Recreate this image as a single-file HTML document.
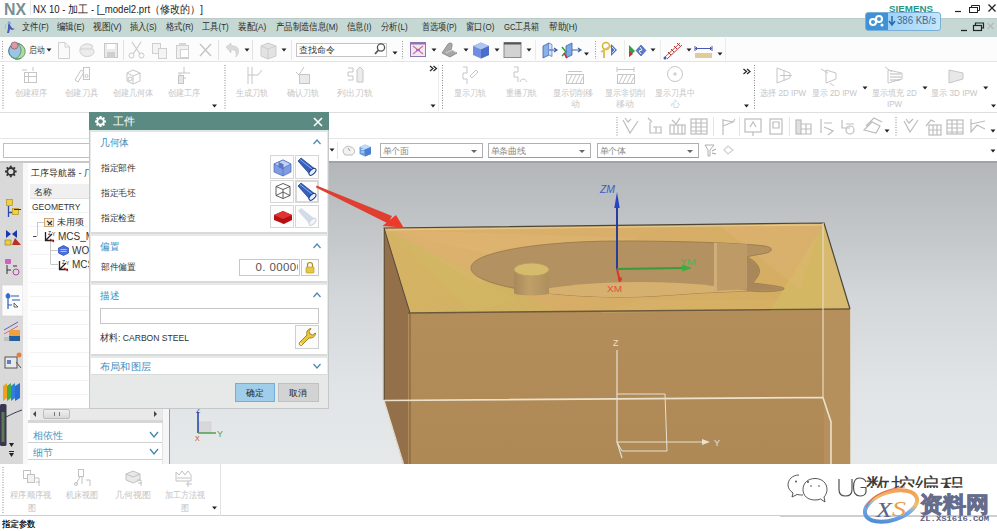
<!DOCTYPE html>
<html><head><meta charset="utf-8">
<style>
*{box-sizing:border-box}
body{margin:0;width:997px;height:531px;position:relative;overflow:hidden;background:#fff;font-family:"Liberation Sans",sans-serif;color:#333}
.a{position:absolute}
.t{position:absolute;white-space:nowrap;line-height:1}
#title{left:0;top:0;width:997px;height:17px;background:#fff}
#menu{left:0;top:17.5px;width:997px;height:20px;background:#c5d8d4;border-top:1.5px solid #bacbc9;border-bottom:1px solid #bccbca}
#tb1{left:0;top:37px;width:997px;height:25px;background:#fcfcfc;border-bottom:1px solid #e4e4e4}
#rib{left:0;top:62px;width:997px;height:51px;background:#fff;border-bottom:1px solid #dedede}
#tb2{left:0;top:113px;width:997px;height:26px;background:#fff;border-bottom:1px solid #e6e6e6}
#sel{left:0;top:139px;width:997px;height:22px;background:#fff}
#vp{left:169px;top:161px;width:828px;height:303px;background:linear-gradient(#b3b7b9,#c6cacc 28%,#d3d7d9 45%,#e1e4e6 74%,#e6e9ea);border-top:2px solid #9fa3a6}
#res{left:0;top:161px;width:23px;height:303px;background:#d9d9d9;border-top:2px solid #c8c8c8}
#nav{left:23px;top:161px;width:146px;height:303px;background:#f4f4f4;border-top:2px solid #c8c8c8}
#brib{left:0;top:464px;width:997px;height:52px;background:#fff;border-bottom:1px solid #cfcfcf}
#status{left:0;top:516px;width:997px;height:15px;background:#fff}
.ddl{position:absolute;height:15px;border:1px solid #b0b0b0;border-bottom-color:#9a9a9a;background:#fff;font-size:9px;color:#8a8a8a;padding:1.5px 0 0 1.5px;letter-spacing:-0.3px;line-height:1.2}
.ddl:after{content:"";position:absolute;right:5px;top:6px;border-left:3px solid transparent;border-right:3px solid transparent;border-top:3px solid #666}
.mi{font-size:9.5px;color:#2b2b2b;top:22px}
.rl{font-size:9px;color:#c4c4c4;text-align:center}
</style></head><body>

<div id="title" class="a">
  <div class="t" style="left:3.5px;top:1.5px;font-size:16px;font-weight:bold;color:#7a8f8f;--fw:22px;transform:scaleX(0.989);transform-origin:0 0">NX</div>
  <div class="a" style="left:30px;top:0;width:1px;height:15px;background:#e6e6e6"></div>
  <div class="t" style="left:33px;top:3.5px;font-size:10.5px;color:#222;--fw:170px;transform:scaleX(0.913);transform-origin:0 0">NX 10 - 加工 - [_model2.prt（修改的）]</div>
  <div class="t" style="left:889px;top:4.5px;font-size:8.5px;font-weight:bold;color:#279686;--fw:44px;transform:scaleX(1.150);transform-origin:0 0">SIEMENS</div>
</div>
<svg class="a" style="left:860px;top:0;z-index:2" width="137" height="37" viewBox="860 0 137 37">
 <path d="M955,11.5 H961" stroke="#222" stroke-width="1.2"/>
 <rect x="969.5" y="7.5" width="8" height="5" fill="none" stroke="#222" stroke-width="1"/><path d="M971.5,7.5 V5.5 H979.5 V10.5 H977.5" fill="none" stroke="#222" stroke-width="1"/>
 <path d="M988.5,4.5 L995.5,11.5 M995.5,4.5 L988.5,11.5" stroke="#222" stroke-width="1.3"/>
 <path d="M961,30.5 H967" stroke="#222" stroke-width="1.3"/>
 <rect x="973.5" y="25.5" width="8" height="5" fill="none" stroke="#222" stroke-width="1.2"/><path d="M975.5,25.5 V23 H983.5 V28 H981.5" fill="none" stroke="#222" stroke-width="1.2"/>
 <path d="M987.5,23 L993.5,29 M993.5,23 L987.5,29" stroke="#b8b8b8" stroke-width="1.3"/>
</svg>
<div id="menu" class="a"></div>
<div class="a" style="left:865px;top:12px;width:76px;height:19px;border-radius:3px;background:linear-gradient(90deg,#3f92d6 0,#3f92d6 22px,#9fd2f6 22px,#c4e6fb 100%);border:1px solid #7ab0d8"></div>
<svg class="a" style="left:868px;top:14px" width="18" height="15"><circle cx="5" cy="8" r="3" fill="none" stroke="#fff" stroke-width="2"/><circle cx="11" cy="5" r="3" fill="none" stroke="#fff" stroke-width="2"/><circle cx="14" cy="11" r="1.5" fill="#fff"/></svg>
<svg class="a" style="left:888px;top:15px" width="8" height="12"><path d="M4,1 V9 M1,6 L4,10 L7,6" stroke="#2a6aa8" stroke-width="1.5" fill="none"/></svg>
<div class="t" style="left:897px;top:16px;font-size:10px;color:#3a6a98;--fw:39px;transform:scaleX(0.961);transform-origin:0 0">386 KB/s</div>
<svg class="a" style="left:3px;top:20px" width="14" height="14"><path d="M5,2 C7,1 8,3 7,5 L9,8 L12,9 L9,10 L7,9 L6,13 L4,13 L5,8 Z" fill="#4a5ab8"/><path d="M3,4 L2,9" stroke="#a0c8a0" stroke-width="1"/><circle cx="6" cy="3" r="1.5" fill="#8aa0e0"/></svg>

<div class="t mi" style="left:21.7px;--fw:26.6px;transform:scaleX(0.828);transform-origin:0 0">文件(F)</div>
<div class="t mi" style="left:56.5px;--fw:27.5px;transform:scaleX(0.842);transform-origin:0 0">编辑(E)</div>
<div class="t mi" style="left:92.5px;--fw:28.4px;transform:scaleX(0.869);transform-origin:0 0">视图(V)</div>
<div class="t mi" style="left:129.9px;--fw:26.7px;transform:scaleX(0.817);transform-origin:0 0">插入(S)</div>
<div class="t mi" style="left:166.0px;--fw:27.5px;transform:scaleX(0.828);transform-origin:0 0">格式(R)</div>
<div class="t mi" style="left:202.2px;--fw:26.6px;transform:scaleX(0.828);transform-origin:0 0">工具(T)</div>
<div class="t mi" style="left:238.3px;--fw:28.2px;transform:scaleX(0.863);transform-origin:0 0">装配(A)</div>
<div class="t mi" style="left:275.9px;--fw:62.0px;transform:scaleX(0.835);transform-origin:0 0">产品制造信息(M)</div>
<div class="t mi" style="left:347.3px;--fw:24.3px;transform:scaleX(0.839);transform-origin:0 0">信息(I)</div>
<div class="t mi" style="left:381.1px;--fw:26.6px;transform:scaleX(0.841);transform-origin:0 0">分析(L)</div>
<div class="t mi" style="left:421.9px;--fw:34.7px;transform:scaleX(0.813);transform-origin:0 0">首选项(P)</div>
<div class="t mi" style="left:466.0px;--fw:28.3px;transform:scaleX(0.839);transform-origin:0 0">窗口(O)</div>
<div class="t mi" style="left:503.8px;--fw:35.5px;transform:scaleX(0.802);transform-origin:0 0">GC工具箱</div>
<div class="t mi" style="left:548.7px;--fw:28.3px;transform:scaleX(0.852);transform-origin:0 0">帮助(H)</div>

<div id="tb1" class="a"></div>
<svg class="a" style="left:0;top:37px" width="730" height="25" viewBox="0 37 730 25">
 <path d="M2.5,41 V59" stroke="#999" stroke-width="1" stroke-dasharray="1,1.5"/>
 <!-- globe -->
 <circle cx="16.5" cy="51" r="7.8" fill="#9cc4e4" stroke="#3a6e84" stroke-width="1"/>
 <path d="M17,43.5 C22,44 26,48 25,53 C24,57 20,60 15,59 C19,57 21,54 21,50 C21,47 19,45 17,43.5 Z" fill="#b4d8a4" stroke="#4a8a58" stroke-width="0.8"/>
 <path d="M10,55 C13,59 18,60 21,58" stroke="#58a068" stroke-width="1.2" fill="none"/>
 <circle cx="14.5" cy="45.5" r="3.6" fill="#dc9aa4" stroke="#7a4a50" stroke-width="0.6"/>
 <path d="M46.5,48.5 L51.5,48.5 L49,51.5 Z" fill="#222"/>
 <!-- new/open/save gray -->
 <path d="M58.5,42.5 H65 L69.5,47 V58.5 H58.5 Z M65,42.5 V47 H69.5" fill="#fafafa" stroke="#cfcfcf" stroke-width="1"/>
 <path d="M80,49 C81,44 88,42 93,46 L91,49 M80,49 C79,54 84,58 90,56 C94,55 95,51 93,49 Z" fill="#ececec" stroke="#d0d0d0" stroke-width="1"/>
 <rect x="104.5" y="43.5" width="13" height="14" fill="#eaeaea" stroke="#c8c8c8"/><rect x="107" y="44" width="8" height="5" fill="#fff"/><rect x="107" y="52" width="8" height="5.5" fill="#cfcfcf"/>
 <line x1="123.5" y1="40" x2="123.5" y2="60" stroke="#e2e2e2"/>
 <!-- scissors -->
 <path d="M132,42 L140,54 M141,42 L133,54" stroke="#cacaca" stroke-width="1.2"/><circle cx="131.5" cy="55.5" r="2.5" fill="none" stroke="#cacaca"/><circle cx="141.5" cy="55.5" r="2.5" fill="none" stroke="#cacaca"/>
 <!-- copy -->
 <rect x="152.5" y="43.5" width="8" height="10" fill="#f4f4f4" stroke="#cfcfcf"/><rect x="158.5" y="48.5" width="8" height="10" fill="#f4f4f4" stroke="#cfcfcf"/>
 <!-- paste -->
 <rect x="176.5" y="45.5" width="12" height="13" fill="#f0f0f0" stroke="#cdcdcd"/><rect x="179" y="43" width="7" height="3" fill="#d6d6d6"/><rect x="180.5" y="49.5" width="8" height="8" fill="#fff" stroke="#d2d2d2"/>
 <!-- delete -->
 <path d="M200,44 L211,56 M211,44 L200,56" stroke="#c2c2c2" stroke-width="1.3"/>
 <line x1="218.5" y1="40" x2="218.5" y2="60" stroke="#e2e2e2"/>
 <!-- undo -->
 <path d="M226,47 L231,43 V46 C237,45 240,49 238,54 L236,57 C237,52 235,49 231,50 V53 Z" fill="#dadada" stroke="#c8c8c8" stroke-width="0.6"/>
 <path d="M244.5,48.5 L249.5,48.5 L247,51.5 Z" fill="#222"/>
 <line x1="252.5" y1="40" x2="252.5" y2="60" stroke="#e2e2e2"/>
 <!-- layer box gray -->
 <path d="M261,46 L268,43 L276,46 V56 L268,59 L261,56 Z" fill="#e2e2e2" stroke="#cdcdcd"/><path d="M261,46 L268,49 L276,46 M268,49 V59" stroke="#cdcdcd" fill="none"/>
 <path d="M281.5,48.5 L286.5,48.5 L284,51.5 Z" fill="#222"/>
 <line x1="291.5" y1="40" x2="291.5" y2="60" stroke="#e6e6e6"/>
 <!-- search icon -->
 <path d="M392.5,51.5 L397.5,51.5 L395,54.5 Z" fill="#222"/>
 <path d="M402.5,41 V59" stroke="#999" stroke-width="1" stroke-dasharray="1,1.5"/>
 <!-- orient view -->
 <rect x="410.5" y="42.5" width="15" height="14" fill="#f0e8f4" stroke="#8a78b0" stroke-width="1"/><rect x="410.5" y="42.5" width="15" height="2" fill="#8a78b0"/>
 <path d="M413,46 L418,50 L413,54 M423,46 L418,50 L423,54" stroke="#e07090" stroke-width="1.3" fill="none"/><path d="M416,50 H420" stroke="#6070d0" stroke-width="1.2"/>
 <path d="M431.5,48.5 L436.5,48.5 L434,51.5 Z" fill="#222"/>
 <!-- shading -->
 <path d="M442,53 L448,44 C450,42 453,43 452,46 L451,50 L457,53 L450,57 Z" fill="#a8a8a8" stroke="#777" stroke-width="0.7"/><path d="M446,53 L452,50 L456,52.5" stroke="#d8d8d8" fill="none"/>
 <path d="M463.5,48.5 L468.5,48.5 L466,51.5 Z" fill="#222"/>
 <!-- blue cube -->
 <path d="M473,46 L481,42.5 L489,46 V55 L481,58.5 L473,55 Z" fill="#6e8ee0"/><path d="M473,46 L481,49.5 L489,46 L481,42.5 Z" fill="#b0c4f4"/><path d="M481,49.5 V58.5 L489,55 V46 Z" fill="#4d6ec8"/>
 <path d="M494.5,48.5 L499.5,48.5 L497,51.5 Z" fill="#222"/>
 <!-- gray window -->
 <rect x="504" y="42.5" width="17" height="15" fill="#d2d2d2" stroke="#8a8a8a" stroke-width="1"/><rect x="504" y="42.5" width="17" height="2" fill="#555"/>
 <path d="M526.5,48.5 L531.5,48.5 L529,51.5 Z" fill="#222"/>
 <line x1="535.5" y1="40" x2="535.5" y2="60" stroke="#ebebeb"/>
 <!-- box with arrow -->
 <path d="M543,46 L549,43 V55 L543,58 Z" fill="#8ab0e8" stroke="#3a60b0" stroke-width="0.8"/><path d="M549,43 L552,44.5 V56.5 L549,55" fill="#d0e0f8" stroke="#3a60b0" stroke-width="0.6"/><path d="M549,50 H556 M554,48 L557,50 L554,52" stroke="#4060a8" stroke-width="1.2" fill="none"/>
 <path d="M566,46 L572,43 V55 L566,58 Z" fill="#7ea8e8" stroke="#3a60b0" stroke-width="0.8"/><path d="M572,50 H580 M578,48 L581,50 L578,52" stroke="#4060a8" stroke-width="1.2" fill="none"/><path d="M562,47 L566,52 M562,56 L566,52" stroke="#30a030" stroke-width="1.5"/><path d="M564,53 L567,58" stroke="#d03030" stroke-width="1.5"/>
 <path d="M584.0,52.5 L589.0,52.5 L586.5,55.5 Z" fill="#222"/>
 <path d="M595.5,41 V59" stroke="#999" stroke-width="1" stroke-dasharray="1,1.5"/>
 <!-- yellow tool -->
 <circle cx="606" cy="46" r="3.5" fill="none" stroke="#d8b040" stroke-width="1.5"/><path d="M604,49 L604,58 M601,52 L611,46" stroke="#e0c050" stroke-width="2"/><path d="M611,44 L617,50 L611,56 Z" fill="#5070c0"/><path d="M612,47 L615,50 L612,53" stroke="#fff" stroke-width="0.8" fill="none"/>
 <line x1="624.5" y1="40" x2="624.5" y2="60" stroke="#ebebeb"/>
 <!-- arrow icon -->
 <path d="M629,45 V57 L635,51 Z" fill="#30a040"/><path d="M629,51 V57 L633,54" fill="#d03030"/><path d="M636,50.5 L641,45 L646,50.5 L641,56 Z" fill="#5a78c8" stroke="#3a58a8" stroke-width="0.6"/><path d="M640,47 L642,50 L639,51 L641,54" stroke="#fff" stroke-width="0.9" fill="none"/>
 <path d="M650.5,48.5 L655.5,48.5 L653,51.5 Z" fill="#222"/>
 <line x1="660.5" y1="40" x2="660.5" y2="60" stroke="#ebebeb"/>
 <!-- red ladder -->
 <path d="M665,57 L680,43" stroke="#d05050" stroke-width="1"/><path d="M667,59 L682,45" stroke="#c04040" stroke-width="1"/><path d="M668,52 L671,55 M671,49 L674,52 M674,46 L677,49 M677,43 L680,46" stroke="#b03030" stroke-width="1"/><circle cx="665" cy="58" r="1.5" fill="#4a58b0"/>
 <path d="M686.5,48.5 L691.5,48.5 L689,51.5 Z" fill="#222"/>
 <!-- dimension -->
 <path d="M695,46 V51 M712,46 V51 M695.5,48.5 H711.5" stroke="#4a58b0" stroke-width="1"/><path d="M697,47 L695.5,48.5 L697,50 M710,47 L711.5,48.5 L710,50" stroke="#4a58b0" fill="none"/><rect x="695" y="53" width="17" height="5" fill="#e0cc98"/>
 <path d="M717.5,52.5 L722.5,52.5 L720,55.5 Z" fill="#222"/>
 <line x1="725.5" y1="38" x2="725.5" y2="61" stroke="#ececec"/>
</svg>
<div class="t" style="left:28.7px;top:46px;font-size:9px;color:#333;--fw:15.6px;transform:scaleX(0.867);transform-origin:0 0">启动</div>
<div class="a" style="left:296px;top:43px;width:91px;height:14px;background:#fff;border:1px solid #c4c4c4"></div>
<div class="t" style="left:299px;top:46px;font-size:9px;color:#333">查找命令</div>
<svg class="a" style="left:373px;top:42px" width="14" height="14"><circle cx="8" cy="5.5" r="3.6" fill="none" stroke="#555" stroke-width="1.3"/><path d="M5.5,8 L2,12" stroke="#555" stroke-width="1.8"/></svg>

<div id="rib" class="a"></div>
<svg class="a" style="left:0;top:62px" width="997" height="51" viewBox="0 62 997 51">
<path d="M3,65 V110" stroke="#8a8a8a" stroke-width="1" stroke-dasharray="1,1.5"/><path d="M225,65 V110" stroke="#8a8a8a" stroke-width="1" stroke-dasharray="1,1.5"/><path d="M442.5,65 V110" stroke="#8a8a8a" stroke-width="1" stroke-dasharray="1,1.5"/><path d="M754.5,65 V110" stroke="#8a8a8a" stroke-width="1" stroke-dasharray="1,1.5"/><line x1="438.5" y1="64" x2="438.5" y2="111" stroke="#ececec"/><path d="M212.0,104.5 L217.0,104.5 L214.5,107.5 Z" fill="#222"/><path d="M430.5,104.5 L435.5,104.5 L433,107.5 Z" fill="#222"/><path d="M744.0,104.5 L749.0,104.5 L746.5,107.5 Z" fill="#222"/><path d="M862.5,86.5 L867.5,86.5 L865,89.5 Z" fill="#222"/><path d="M922.5,86.5 L927.5,86.5 L925,89.5 Z" fill="#222"/><path d="M983.2,86.5 L988.2,86.5 L985.7,89.5 Z" fill="#222"/><path d="M991.0,104.5 L996.0,104.5 L993.5,107.5 Z" fill="#222"/><path d="M430,66 L433,68.5 L430,71 M433.5,66 L436.5,68.5 L433.5,71" stroke="#222" stroke-width="1.2" fill="none"/><path d="M743.5,69 L746.5,71.5 L743.5,74 M747,69 L750,71.5 L747,74" stroke="#222" stroke-width="1.2" fill="none"/><g stroke="#c6c6c6" stroke-width="1" fill="none"><rect x="24.5" y="72.5" width="12" height="10"/><path d="M24.5,76.5 H36.5 M28.5,72.5 V82.5 M22,70 H27 M33,67 V71"/></g><g stroke="#c6c6c6" stroke-width="1" fill="none"><path d="M75,80 L81,70 L84,72 L78,82 Z"/><rect x="83.5" y="67.5" width="6" height="12"/><circle cx="86.5" cy="76" r="1.5"/></g><g stroke="#c6c6c6" stroke-width="1" fill="none"><path d="M127,73 L133,70 L140,73 V81 L133,84 L127,81 Z M127,73 L133,76 L140,73 M133,76 V84"/><circle cx="130" cy="79" r="2"/></g><g stroke="#c6c6c6" stroke-width="1" fill="none"><path d="M178,73 H190 M180,73 V84 M180,78 H186 M184,67 V73"/><rect x="178.5" y="75.5" width="5" height="8" fill="#e6e6e6"/></g><g stroke="#c6c6c6" stroke-width="1" fill="none"><path d="M248,67 V84 M252,67 V84 M248,75 H258 L262,70"/></g><g stroke="#c6c6c6" stroke-width="1" fill="none"><path d="M296,72 L299,75 L304,67"/><rect x="299.5" y="74.5" width="10" height="9" fill="#eaeaea"/></g><g stroke="#c6c6c6" stroke-width="1" fill="none"><path d="M348,68 H353 V72 H348 V76 H353 V80 H348"/><path d="M357,70 L360,67 L363,70 V82 H357 Z" fill="#ececec"/></g><g stroke="#c6c6c6" stroke-width="1" fill="none"><path d="M463,67 H467 V73 H463 V79 H467 V84"/><path d="M470,76 L476,70 L478,72 L472,78 Z"/></g><g stroke="#c6c6c6" stroke-width="1" fill="none"><path d="M514,67 H518 V72 H514 V77 H518 V82"/><path d="M520,82 C521,78 525,78 527,82"/></g><g stroke="#c6c6c6" stroke-width="1" fill="none"><rect x="566.5" y="74.5" width="17" height="9"/><path d="M568,83 L572,75 M572,83 L576,75 M576,83 L580,75 M580,83 L583,77" /><path d="M568,71.5 H582"/></g><g stroke="#c6c6c6" stroke-width="1" fill="none"><rect x="617.5" y="74.5" width="17" height="9"/><path d="M619,83 L623,75 M623,83 L627,75 M627,83 L631,75 M631,83 L634,77"/><path d="M617,69.5 H634 M617,67 V72 M634,67 V72"/></g><g stroke="#c6c6c6" stroke-width="1" fill="none"><circle cx="675" cy="74" r="7.5"/><path d="M673,74 H677 M675,72 V76"/></g><g stroke="#c6c6c6" stroke-width="1" fill="none"><path d="M777,68 V83 L790,78 V73 Z M784,70 V81 M780,75.5 H792"/></g><g stroke="#c6c6c6" stroke-width="1" fill="none"><path d="M826,70 L836,73 V79 L826,83 Z M821,69 L828,73 M830,83 L834,86"/></g><g stroke="#c6c6c6" stroke-width="1" fill="none"><path d="M888,70 L902,73 V79 L888,83 Z M885,67 L892,72"/><path d="M890,74 H901 M890,77 H901 M890,80 H900" stroke="#b8b8b8"/></g><g stroke="#c6c6c6" stroke-width="1" fill="none"><path d="M949,70 V83 L963,79 V73 Z" fill="#e8e8e8"/></g></svg>
<div class="t" style="left:15px;top:89px;font-size:9px;color:#c6c6c6;--fw:32.3px;transform:scaleX(0.897);transform-origin:0 0">创建程序</div>
<div class="t" style="left:64.6px;top:89px;font-size:9px;color:#c6c6c6;--fw:33.4px;transform:scaleX(0.928);transform-origin:0 0">创建刀具</div>
<div class="t" style="left:113px;top:89px;font-size:9px;color:#c6c6c6;--fw:40.4px;transform:scaleX(0.898);transform-origin:0 0">创建几何体</div>
<div class="t" style="left:168.4px;top:89px;font-size:9px;color:#c6c6c6;--fw:32.3px;transform:scaleX(0.897);transform-origin:0 0">创建工序</div>
<div class="t" style="left:236px;top:89px;font-size:9px;color:#c6c6c6;--fw:32.4px;transform:scaleX(0.900);transform-origin:0 0">生成刀轨</div>
<div class="t" style="left:287px;top:89px;font-size:9px;color:#c6c6c6;--fw:32.0px;transform:scaleX(0.889);transform-origin:0 0">确认刀轨</div>
<div class="t" style="left:336.5px;top:89px;font-size:9px;color:#c6c6c6;--fw:35.5px;transform:scaleX(0.986);transform-origin:0 0">列出刀轨</div>
<div class="t" style="left:453.8px;top:89px;font-size:9px;color:#c6c6c6;--fw:32.2px;transform:scaleX(0.894);transform-origin:0 0">显示刀轨</div>
<div class="t" style="left:505.7px;top:89px;font-size:9px;color:#c6c6c6;--fw:31.3px;transform:scaleX(0.869);transform-origin:0 0">重播刀轨</div>
<div class="t" style="left:553px;top:89px;font-size:9px;color:#c6c6c6;--fw:40.4px;transform:scaleX(0.898);transform-origin:0 0">显示切削移</div>
<div class="t" style="left:570.5px;top:99.5px;font-size:9px;color:#c6c6c6;--fw:9.0px;transform:scaleX(1.000);transform-origin:0 0">动</div>
<div class="t" style="left:605px;top:89px;font-size:9px;color:#c6c6c6;--fw:40.3px;transform:scaleX(0.896);transform-origin:0 0">显示非切削</div>
<div class="t" style="left:616px;top:99.5px;font-size:9px;color:#c6c6c6;--fw:18.0px;transform:scaleX(1.000);transform-origin:0 0">移动</div>
<div class="t" style="left:655px;top:89px;font-size:9px;color:#c6c6c6;--fw:39.6px;transform:scaleX(0.880);transform-origin:0 0">显示刀具中</div>
<div class="t" style="left:670.5px;top:99.5px;font-size:9px;color:#c6c6c6;--fw:9.0px;transform:scaleX(1.000);transform-origin:0 0">心</div>
<div class="t" style="left:760.3px;top:89px;font-size:9px;color:#c6c6c6;--fw:46.2px;transform:scaleX(0.897);transform-origin:0 0">选择 2D IPW</div>
<div class="t" style="left:812px;top:89px;font-size:9px;color:#c6c6c6;--fw:45.0px;transform:scaleX(0.874);transform-origin:0 0">显示 2D IPW</div>
<div class="t" style="left:872.3px;top:89px;font-size:9px;color:#c6c6c6;--fw:44.7px;transform:scaleX(0.894);transform-origin:0 0">显示填充 2D</div>
<div class="t" style="left:887px;top:99.5px;font-size:9px;color:#c6c6c6;--fw:15.0px;transform:scaleX(0.882);transform-origin:0 0">IPW</div>
<div class="t" style="left:931.3px;top:89px;font-size:9px;color:#c6c6c6;--fw:46.5px;transform:scaleX(0.903);transform-origin:0 0">显示 3D IPW</div>

<div id="tb2" class="a"></div>
<svg class="a" style="left:600px;top:113px" width="397" height="26" viewBox="600 113 397 26">
<path d="M617,117 V136" stroke="#8a8a8a" stroke-width="1" stroke-dasharray="1,1.5"/><path d="M896,117 V136" stroke="#8a8a8a" stroke-width="1" stroke-dasharray="1,1.5"/><line x1="713.5" y1="117" x2="713.5" y2="136" stroke="#e4e4e4"/><line x1="739.5" y1="117" x2="739.5" y2="136" stroke="#e4e4e4"/><line x1="789.5" y1="117" x2="789.5" y2="136" stroke="#e4e4e4"/><path d="M884.5,129.5 L889.5,129.5 L887,132.5 Z" fill="#222"/><path d="M990.5,129.5 L995.5,129.5 L993,132.5 Z" fill="#222"/><g stroke="#bdbdbd" stroke-width="1.2" fill="none"><path d="M623,120 L630,133 L638,121 M625,118 L628,122 L631,119"/></g><g stroke="#bdbdbd" stroke-width="1.2" fill="none"><path d="M648,118 L652,122 M650,122 V133 H662 M653,127 H661 V133 M656,127 V133"/></g><g stroke="#bdbdbd" stroke-width="1.2" fill="none"><rect x="670" y="125" width="15" height="9"/><path d="M674,125 V134 M678,125 V134 M682,125 V134 M672,120 L676,124 L680,118"/></g><g stroke="#bdbdbd" stroke-width="1.2" fill="none"><rect x="691" y="119" width="16" height="15"/><path d="M691,123 H707 M691,127 H707 M691,131 H707 M696,119 V134 M701,119 V134"/></g><g stroke="#bdbdbd" stroke-width="1.2" fill="none"><path d="M723,119 V135 M723,120 L733,122 L723,126 M733,122 L735,119"/></g><g stroke="#bdbdbd" stroke-width="1.2" fill="none"><rect x="745" y="119" width="16" height="13"/><path d="M750,127 L753,122 L756,127 M753,132 V136"/></g><g stroke="#bdbdbd" stroke-width="1.2" fill="none"><rect x="770" y="119" width="12" height="15"/><path d="M773,122 H779 V128 H773 Z"/></g><g stroke="#bdbdbd" stroke-width="1.2" fill="none"><rect x="796" y="120" width="5" height="14" fill="#e0e0e0"/><path d="M801,124 H811 V134 H801 M801,129 H811 M806,124 V134"/></g><g stroke="#bdbdbd" stroke-width="1.2" fill="none"><path d="M821,119 V133 M824,123 H832 M824,127 L833,131 L828,135"/></g><g stroke="#bdbdbd" stroke-width="1.2" fill="none"><path d="M842,120 V128 H850 M846,124 H854"/><circle cx="850" cy="130" r="4"/></g><g stroke="#bdbdbd" stroke-width="1.2" fill="none"><path d="M864,130 L872,122 L880,126 L876,133 Z M866,126 L874,118 L882,122"/></g><g stroke="#bdbdbd" stroke-width="1.2" fill="none"><path d="M904,121 L910,132 L918,120 M906,119 L909,123 L913,119"/></g><g stroke="#bdbdbd" stroke-width="1.2" fill="none"><rect x="929" y="125" width="12" height="10"/><path d="M933,125 V135 M937,125 V135 M929,130 H941 M926,126 L931,120 L935,122"/></g><g stroke="#bdbdbd" stroke-width="1.2" fill="none"><rect x="947" y="120" width="16" height="14"/><path d="M947,124 H963 M947,128 H963 M947,132 H963 M952,120 V134 M957,120 V134"/></g><g stroke="#bdbdbd" stroke-width="1.2" fill="none"><path d="M971,119 V132 L977,125 L985,129 M971,124 L985,121"/></g></svg>

<div id="sel" class="a"></div>
<div class="a" style="left:3px;top:143px;width:90px;height:15px;background:#fff;border:1px solid #c0c0c0"></div>
<svg class="a" style="left:325px;top:139px" width="672" height="22" viewBox="325 139 672 22">
 <path d="M329.5,148.5 L334.5,148.5 L332,151.5 Z" fill="#222"/>
 <line x1="337.5" y1="142" x2="337.5" y2="159" stroke="#e4e4e4"/>
 <path d="M343,152 C343,147 348,145 351,147 C355,148 356,153 352,155 H345 Z" fill="#f2f2f2" stroke="#b4b4b4" stroke-width="0.9"/><path d="M348,148 L350,151" stroke="#999"/>
 <path d="M359.5,147 L365,144.5 L371,147 V154 L365,156.5 L359.5,154 Z" fill="#6a9ee0"/><path d="M359.5,147 L365,149.5 L371,147 L365,144.5 Z" fill="#c0dcf8"/><path d="M365,149.5 V156.5 L371,154 V147 Z" fill="#4a7ed0"/><path d="M361,149.5 H364 M361,152 H364" stroke="#e8f2ff" stroke-width="0.8"/>
 <path d="M705,145 H714 L710,150 V156 H708 V150 Z" fill="none" stroke="#b0b0b0" stroke-width="1"/><path d="M712,151 L716,149 M712,153 L716,154" stroke="#a0a0a0"/>
 <path d="M724,150 L728,146 L733,150 L728,154 Z" fill="none" stroke="#d0d0d0" stroke-width="1.2"/>
 <path d="M990.5,149.5 L995.5,149.5 L993,152.5 Z" fill="#222"/>
</svg>
<div class="ddl" style="left:380px;top:143px;width:103px">单个面</div>
<div class="ddl" style="left:488px;top:143px;width:103px">单条曲线</div>
<div class="ddl" style="left:597px;top:143px;width:102px">单个体</div>
</div>

<div id="vp" class="a"></div>
<div id="res" class="a"></div>
<!-- resource bar icons -->
<svg class="a" style="left:0;top:161px" width="23" height="303" viewBox="0 161 23 303">
 <g transform="translate(10.8 171.5)"><g fill="#333"><rect x="-1" y="-5.8" width="2" height="11.6"/><rect x="-1" y="-5.8" width="2" height="11.6" transform="rotate(45)"/><rect x="-1" y="-5.8" width="2" height="11.6" transform="rotate(90)"/><rect x="-1" y="-5.8" width="2" height="11.6" transform="rotate(135)"/></g><circle r="4.4" fill="#333"/><circle r="2.6" fill="#dadada"/></g>
 <!-- nav icon 1 -->
 <rect x="6.5" y="199.5" width="6" height="6" fill="#f0d040" stroke="#b09020" stroke-width="0.7"/><rect x="12.5" y="208.5" width="6" height="6" fill="#f0d040" stroke="#b09020" stroke-width="0.7"/>
 <path d="M8.5,206 V217 M8.5,212.5 H12" stroke="#2a4aa8" stroke-width="1.3" fill="none"/><path d="M14,209.5 H21" stroke="#333" stroke-width="1"/>
 <!-- machine -->
 <path d="M6,230 L11,234 L6,238 Z M17,230 L12,234 L17,238 Z" fill="#1838b0"/>
 <rect x="5" y="240" width="6" height="5" fill="#e8d040" stroke="#806020" stroke-width="0.5"/><path d="M12,245 L15,238 L21,245 Z" fill="#b83020"/>
 <!-- pink -->
 <rect x="5" y="259" width="6" height="5" rx="1" fill="#d060c0"/><path d="M7,265 V274 M7,270 H11 M13,266 H17" stroke="#333" stroke-width="1" fill="none"/><circle cx="16" cy="272" r="3" fill="none" stroke="#c040a0" stroke-width="1"/>
 <!-- active tab -->
 <rect x="2" y="285" width="21" height="31" fill="#fbfbfb" stroke="#d0d0d0" stroke-width="0.6"/>
 <circle cx="8" cy="296" r="2.5" fill="#3a7ad0"/><path d="M8,293 V309 M8,305 H12 M11,296 H19 M12,300 H20" stroke="#2a60b8" stroke-width="1.2" fill="none"/><path d="M14,303 L18,307 H14 Z" fill="none" stroke="#444" stroke-width="0.8"/>
 <!-- box icon -->
 <path d="M4,330 L18,322" stroke="#6060c0" stroke-width="1"/><path d="M4,334 L18,326" stroke="#e05050" stroke-width="0.8"/>
 <rect x="9" y="330" width="11" height="8" fill="#f0a040"/><rect x="9" y="336" width="11" height="5" fill="#2060a0"/><path d="M4,338 H10 M4,340 H10" stroke="#999" stroke-width="0.8"/>
 <!-- gray doc with orange -->
 <rect x="5" y="357" width="12" height="11" fill="#e8e8e8" stroke="#555" stroke-width="1"/><rect x="7" y="360" width="4" height="4" fill="#6080c0"/><circle cx="19" cy="355" r="2.5" fill="#e08040"/><path d="M16,362 L21,368" stroke="#555" stroke-width="1"/>
 <!-- books -->
 <path d="M3,386 L7,383 V398 L3,401 Z" fill="#f0a020"/><path d="M7,386 L11,383 V398 L7,401 Z" fill="#40b040"/><path d="M11,386 L15,383 V398 L11,401 Z" fill="#3080e0"/><path d="M15,386 L20,383 V398 L15,401 Z" fill="#2a70d0"/>
 <!-- dark bar -->
 <rect x="0" y="404" width="6.5" height="42" rx="1.5" fill="#3a3550"/>
 <rect x="1.5" y="412" width="3" height="30" fill="#5a7a50"/>
 <path d="M6,417 C12,414 16,412 22,410" stroke="#3a3a5a" stroke-width="1" fill="none"/>
 <path d="M9,443 L14,443 L11.5,447 Z M9,453 L14,453 L11.5,457 Z" fill="#222"/><rect x="9" y="451" width="5" height="1" fill="#222"/>
</svg>
<div id="nav" class="a"></div>
<div class="a" style="left:23px;top:163px;width:5px;height:301px;background:#f8f8f8"></div>
<div class="a" style="left:28px;top:163px;width:135px;height:301px;background:#fff"></div>
<div class="a" style="left:162px;top:163px;width:7px;height:301px;background:#f6f6f6;border-left:1px solid #e4e4e4"></div>
<div class="a" style="left:169px;top:161px;width:1px;height:303px;background:#9a9ea2"></div>
<div class="a" style="left:28px;top:165px;width:61px;height:15px;overflow:hidden"><div class="t" style="left:3px;top:3.5px;font-size:9px;color:#2a2a2a">工序导航器 - 厂房</div></div>
<div class="a" style="left:30px;top:184px;width:132px;height:15px;background:#f0f0f0;border-bottom:1px solid #e0e0e0"></div>
<div class="t" style="left:34px;top:187.5px;font-size:9px;color:#333">名称</div>
<div class="a" style="left:30px;top:199px;width:132px;height:210px;background:repeating-linear-gradient(#fff 0 13px,#f3f3f3 13px 14px)"></div>
<div class="t" style="left:32px;top:202px;font-size:9.5px;color:#333;--fw:48.5px;transform:scaleX(0.895);transform-origin:0 0">GEOMETRY</div>
<svg class="a" style="left:28px;top:213px" width="62" height="60" viewBox="28 213 62 60">
 <path d="M37.5,222 V236 M37.5,222.5 H44 M50.5,241 V264 M50.5,250.5 H58 M50.5,264.5 H58" stroke="#c8c8c8" stroke-width="1" fill="none"/>
 <path d="M33,236.5 H36.5" stroke="#444" stroke-width="1"/>
 <rect x="44.5" y="218.5" width="9" height="8" fill="#fbecd0" stroke="#c8a070" stroke-width="0.9"/><path d="M47,221 L52,225 M52,221 L48,225" stroke="#333" stroke-width="1.1"/>
 <path d="M45.5,232 V240.5 H54 M45.5,240.5 L52,234" stroke="#222" stroke-width="1.3" fill="none"/><text x="48" y="235" font-size="5" fill="#222" font-family="Liberation Sans">Z</text><text x="52" y="236" font-size="5" fill="#222" font-family="Liberation Sans">Y</text><path d="M50,239 L54,242" stroke="#c02828" stroke-width="1.2"/>
 <path d="M58.5,248 L63.5,245.5 L68.5,248 V253 L63.5,255.5 L58.5,253 Z" fill="#4a6ee0" stroke="#2a48b0" stroke-width="0.7"/><path d="M60.5,249.5 H66.5 M60.5,251.5 H66.5" stroke="#c8d8ff" stroke-width="0.8"/>
 <path d="M59.5,261 V269.5 H68 M59.5,269.5 L66,263" stroke="#222" stroke-width="1.3" fill="none"/><text x="62" y="264" font-size="5" fill="#222" font-family="Liberation Sans">Z</text><text x="66" y="265" font-size="5" fill="#222" font-family="Liberation Sans">Y</text><path d="M64,268 L68,271" stroke="#c02828" stroke-width="1.2"/>
</svg>
<div class="t" style="left:57.4px;top:217.5px;font-size:9px;color:#333">未用项</div>
<div class="t" style="left:58px;top:231.5px;font-size:10px;color:#333">MCS_MILL</div>
<div class="t" style="left:72px;top:246px;font-size:10px;color:#333">WORKPIECE</div>
<div class="t" style="left:72px;top:260px;font-size:10px;color:#333">MCS</div>
<!-- scrollbar -->
<div class="a" style="left:30px;top:408px;width:132px;height:12px;background:#e9e9e9;border-top:1px solid #dadada"></div>
<div class="a" style="left:43px;top:409px;width:27px;height:10px;background:linear-gradient(#f0f0f0,#d8d8d8);border:1px solid #bdbdbd;border-radius:2px"></div>
<div class="a" style="left:54px;top:412px;width:6px;height:4px;border-left:1px solid #777;border-right:1px solid #777"></div>
<div class="a" style="left:33px;top:411px;width:0;height:0;border-top:3px solid transparent;border-bottom:3px solid transparent;border-right:3px solid #444"></div>
<div class="a" style="left:154px;top:411px;width:0;height:0;border-top:3px solid transparent;border-bottom:3px solid transparent;border-left:3px solid #444"></div>
<div class="a" style="left:28px;top:420px;width:135px;height:3px;background:#d6d6d6"></div>
<div class="t" style="left:33px;top:430.5px;font-size:10px;color:#4a94c4;--fw:30px;transform:scaleX(1.000);transform-origin:0 0">相依性</div>
<div class="a" style="left:28px;top:442px;width:134px;height:1px;background:#d0d0d0"></div>
<div class="t" style="left:33px;top:447.5px;font-size:10px;color:#4a94c4;--fw:20px;transform:scaleX(1.000);transform-origin:0 0">细节</div>
<div class="a" style="left:28px;top:459px;width:134px;height:1px;background:#d0d0d0"></div>
<svg class="a" style="left:148px;top:430px" width="12" height="26"><path d="M2,2 L6,7 L10,2 M2,19 L6,24 L10,19" stroke="#3a88b0" stroke-width="1.3" fill="none"/></svg>

<svg class="a" style="left:169px;top:163px" width="828" height="301" viewBox="169 163 828 301">
 <defs>
  <linearGradient id="tf" x1="0" y1="0" x2="1" y2="0.3">
   <stop offset="0" stop-color="#dcb06c"/><stop offset="0.5" stop-color="#d8ae68"/><stop offset="1" stop-color="#d4ad62"/>
  </linearGradient>
  <linearGradient id="ff" x1="0" y1="0" x2="0" y2="1">
   <stop offset="0" stop-color="#b48e5a"/><stop offset="1" stop-color="#af8955"/>
  </linearGradient>
 </defs>
 <!-- left face -->
 <polygon points="384,228 410,313 410,464 403,464 384,400" fill="#94704a"/>
 <!-- front face -->
 <polygon points="408,313 850,309 850,464 408,464" fill="url(#ff)"/>
 <polygon points="824,309 850,309 850,464 824,464" fill="#b58f5c"/>
 <!-- top face -->
 <polygon points="384,228 824,223 850,309 410,313" fill="url(#tf)"/>
 <!-- streaks -->
 <polygon points="386,230 560,312 410,313" fill="#cdb95e" opacity="0.45"/>
 <polygon points="388,231 520,300 470,312" fill="#d2bc62" opacity="0.3"/>
 <polygon points="390,230 640,238 520,262" fill="#e2ba78" opacity="0.35"/>
 <polygon points="392,232 560,262 480,285" fill="#e0b676" opacity="0.25"/>
 <polygon points="824,224 850,309 770,311" fill="#d2bf64" opacity="0.55"/>
 <polygon points="822,224 720,226 800,290" fill="#e2b87a" opacity="0.35"/>
 <polygon points="823,224 850,309 823,309" fill="#dcbc7c" opacity="0.5"/>
 <polygon points="640,300 780,300 850,309 600,313" fill="#d6b86a" opacity="0.35"/>
 <!-- pocket -->
 <clipPath id="pk"><path id="pkp" d="M471,268 C471,252 540,241 621,241 C680,241 740,243 765,246 C775,248 773,252 762,254 C755,255 750,256 747,257 C758,262 762,270 758,276 C756,280 753,282 753,283 C770,285 786,287 784,289 C780,292 760,292 747,291 L700,293 C670,295 650,297 621,297 C540,297 471,284 471,268 Z"/></clipPath>
 <path d="M471,268 C471,252 540,241 621,241 C680,241 740,243 765,246 C775,248 773,252 762,254 C755,255 750,256 747,257 C758,262 762,270 758,276 C756,280 753,282 753,283 C770,285 786,287 784,289 C780,292 760,292 747,291 L700,293 C670,295 650,297 621,297 C540,297 471,284 471,268 Z" fill="#b39160" stroke="#9a7c4c" stroke-width="0.9"/>
 <g clip-path="url(#pk)">
  <ellipse cx="640" cy="337" rx="200" ry="55" fill="#d5b06e"/>
  <polygon points="714,240 747,240 747,289 714,291" fill="#bd9a66"/>
  <polygon points="747,257 760,268 756,280 753,283 784,289 747,291" fill="#a8875a"/>
  <rect x="714" y="240" width="3" height="52" fill="#cfae78"/>
 </g>
 <!-- boss -->
 <linearGradient id="bs" x1="0" x2="1"><stop offset="0" stop-color="#a88a5a"/><stop offset="0.45" stop-color="#c0a068"/><stop offset="1" stop-color="#ae8e5c"/></linearGradient>
 <rect x="514" y="269" width="35" height="24" fill="url(#bs)"/>
 <ellipse cx="531.5" cy="293" rx="17.5" ry="2.5" fill="url(#bs)"/>
 <ellipse cx="531.5" cy="269.5" rx="17.5" ry="6.5" fill="#d4bc6c" stroke="#b89a5c" stroke-width="0.8"/>
 <line x1="387" y1="229.8" x2="822" y2="224.8" stroke="#e8d49c" stroke-width="1.3" opacity="0.7"/>
 <!-- edges -->
 <polyline points="384,400 384,228 824,223 850,309" fill="none" stroke="#4e4636" stroke-width="1.2"/>
 <line x1="850.5" y1="309" x2="850.5" y2="464" stroke="#d8d0c0" stroke-width="1"/>
 <line x1="384" y1="228" x2="410" y2="313" stroke="#4e4636" stroke-width="1"/>
 <line x1="383" y1="228" x2="383" y2="400" stroke="#d8d4cc" stroke-width="1"/>
 <line x1="408" y1="313" x2="850" y2="309" stroke="#6b5a3a" stroke-width="1.5"/>
 <line x1="410" y1="313" x2="410" y2="464" stroke="#7a5e3c" stroke-width="1"/>
 <line x1="384" y1="400.5" x2="403.5" y2="464" stroke="#e4dccb" stroke-width="1.2"/>
 <!-- blank wireframe (light) -->
 <polyline points="384,400.5 823,397.5 831,422 831,464" fill="none" stroke="#ece2cc" stroke-width="1.6"/>
 <line x1="823" y1="223" x2="823" y2="397" stroke="#eadcc0" stroke-width="1.2"/>
 <!-- MCS triad -->
 <line x1="617" y1="200" x2="617" y2="269" stroke="#283e98" stroke-width="2"/>
 <polygon points="617,192 614.3,208 619.7,208" fill="#2546c0"/>
 <text x="600" y="193" font-size="10" fill="#3a5ccc" font-style="italic" font-family="Liberation Sans" textLength="15" lengthAdjust="spacingAndGlyphs">ZM</text>
 <line x1="617" y1="269" x2="684" y2="268" stroke="#3c9a3c" stroke-width="2"/>
 <polygon points="692,268 682,264.5 682,271.5" fill="#3cae3c"/>
 <text x="680" y="265" font-size="9" fill="#58b058" font-family="Liberation Sans" textLength="16" lengthAdjust="spacingAndGlyphs">YM</text>
 <line x1="617" y1="269" x2="620" y2="282" stroke="#d83a2a" stroke-width="2"/><circle cx="620" cy="279" r="2" fill="#d83a2a"/>
 <text x="607" y="292" font-size="9" fill="#e05040" font-family="Liberation Sans" textLength="15" lengthAdjust="spacingAndGlyphs">XM</text>
 <!-- WCS triad -->
 <line x1="617" y1="350" x2="617" y2="442" stroke="#e8e0d0" stroke-width="1.2"/>
 <text x="613" y="346" font-size="9" fill="#e8e0d0" font-family="Liberation Sans">Z</text>
 <polyline points="617,394 665,394 667,451 622,451 617,442" fill="none" stroke="#e8e0d0" stroke-width="1"/>
 <line x1="617" y1="442" x2="705" y2="442" stroke="#e8e0d0" stroke-width="1.2"/>
 <polygon points="710,442 702,439 702,445" fill="#e8e0d0"/>
 <text x="714" y="446" font-size="9" fill="#e8e0d0" font-family="Liberation Sans">Y</text>
 <line x1="617" y1="442" x2="622" y2="458" stroke="#d8e8d8" stroke-width="1.2"/>
 <!-- mini triad -->
 <rect x="199" y="422" width="12" height="11" fill="#d8d8d8" stroke="#c8c8c8" stroke-width="0.5"/>
 <line x1="198" y1="433" x2="198" y2="412" stroke="#2040a0" stroke-width="1.5"/>
 <text x="196" y="413" font-size="7" fill="#2040a0" font-family="Liberation Sans">Z</text>
 <line x1="198" y1="433" x2="216" y2="433" stroke="#50a050" stroke-width="1.5"/>
 <text x="217" y="437" font-size="9" fill="#60a060" font-family="Liberation Sans">Y</text>
 <text x="195" y="441" font-size="7" fill="#d04030" font-family="Liberation Sans">X</text>
</svg>


<div id="brib" class="a"></div>
<svg class="a" style="left:0;top:464px" width="997" height="52" viewBox="0 464 997 52">
 <path d="M3,467 V514" stroke="#8a8a8a" stroke-width="1" stroke-dasharray="1,1.5"/>
 <line x1="220.5" y1="464" x2="220.5" y2="516" stroke="#e2e2e2"/>
 <path d="M212.0,506.5 L217.0,506.5 L214.5,509.5 Z" fill="#222"/>
 <g stroke="#c2c2c2" stroke-width="1" fill="none"><rect x="23.5" y="470.5" width="7" height="8"/><rect x="27.5" y="474.5" width="7" height="8" fill="#f2f2f2"/><path d="M35,478 H39 V486 M36,482 H40"/></g>
 <g stroke="#c2c2c2" stroke-width="1" fill="none"><rect x="78.5" y="469.5" width="5" height="7"/><path d="M80,477 L76,484 M82,477 V484 M86,480 H90 V486"/><circle cx="76" cy="484" r="1.5"/></g>
 <g stroke="#c2c2c2" stroke-width="1" fill="none"><path d="M126,474 L133,471 L140,474 V480 L133,483 L126,480 Z" fill="#e8e8e8"/><path d="M126,474 L133,477 L140,474"/><path d="M137,480 H141 V486 M138,483 H142"/></g>
 <g stroke="#c2c2c2" stroke-width="1" fill="none"><path d="M176,472 L179,475 L182,471 L185,475 L188,471 L191,475 V481 H176 Z"/><path d="M177,478 H190"/><path d="M188,481 V487 M186,484 H192"/></g>
</svg>
<div class="t" style="left:10.4px;top:491px;font-size:9px;color:#c4c4c4;--fw:41.6px;transform:scaleX(0.924);transform-origin:0 0">程序顺序视</div>
<div class="t" style="left:28px;top:503.5px;font-size:9px;color:#c4c4c4;--fw:8.0px;transform:scaleX(0.889);transform-origin:0 0">图</div>
<div class="t" style="left:65.7px;top:491px;font-size:9px;color:#c4c4c4;--fw:32.3px;transform:scaleX(0.897);transform-origin:0 0">机床视图</div>
<div class="t" style="left:115px;top:491px;font-size:9px;color:#c4c4c4;--fw:36.0px;transform:scaleX(1.000);transform-origin:0 0">几何视图</div>
<div class="t" style="left:165px;top:491px;font-size:9px;color:#c4c4c4;--fw:40.3px;transform:scaleX(0.896);transform-origin:0 0">加工方法视</div>
<div class="t" style="left:181px;top:503.5px;font-size:9px;color:#c4c4c4;--fw:8.0px;transform:scaleX(0.889);transform-origin:0 0">图</div>

<div id="status" class="a"><div class="t" style="left:2px;top:3.5px;font-size:9px;color:#111;--fw:33px;text-shadow:0.3px 0 0 #111;transform:scaleX(0.917);transform-origin:0 0">指定参数</div></div>

<!-- watermark -->
<svg class="a" style="left:780px;top:464px" width="217" height="67" viewBox="780 464 217 67">
 <path d="M799,475 C792,475 788,480 788,485 C788,488 790,491 793,493 L792,497 L797,494.5 C800,495 802,495 803,495" fill="#fff" stroke="#444" stroke-width="0.9"/>
 <path d="M815,478.5 C808,478.5 803,483 803,489.5 C803,496 808,500 815,500 C817,500 819,499.8 820.5,499 L825,502 L824,497 C826,495 827,492 827,489.5 C827,483 822,478.5 815,478.5 Z" fill="#fff" stroke="#444" stroke-width="0.9"/>
 <circle cx="796" cy="481.5" r="0.9" fill="#444"/><circle cx="808" cy="482" r="0.9" fill="#444"/><circle cx="811" cy="486" r="0.8" fill="#444"/><circle cx="819" cy="486" r="0.8" fill="#444"/>
 <path d="M839,479 V489.5 C839,494 842,496 845.5,496 C849,496 852,494 852,489.5 V479 M866,482 C865,479.5 862.5,478 859.5,478 C855.5,478 853.5,482 853.5,487 C853.5,492.5 856,496 860,496 C863,496 865.5,494.5 866,492 V487.5 H860.5" fill="none" stroke="#505050" stroke-width="1.2"/>
 <clipPath id="wmc"><rect x="866" y="470" width="110" height="18"/></clipPath>
 <text x="866" y="495" font-family="Liberation Sans" font-size="24" fill="#3a3a3a" clip-path="url(#wmc)" textLength="98" lengthAdjust="spacingAndGlyphs">数控编程</text>
 <line x1="780" y1="516.5" x2="997" y2="516.5" stroke="#cfcfcf"/>
 <ellipse cx="891" cy="506" rx="27" ry="14" transform="rotate(-18 891 506)" fill="none" stroke="url(#xsg)" stroke-width="4"/>
 <defs><linearGradient id="xsg" x1="0" y1="1" x2="1" y2="0"><stop offset="0" stop-color="#3f7fd0"/><stop offset="0.45" stop-color="#7ab0e8"/><stop offset="0.6" stop-color="#f0c070"/><stop offset="1" stop-color="#f09040"/></linearGradient></defs>
 <path d="M866,507 C872,494 890,488 905,487" stroke="#e05050" stroke-width="1.2" fill="none" opacity="0.8"/>
 <text x="876" y="517" font-family="Liberation Serif" font-style="italic" font-size="22" fill="#5a6488" textLength="16" lengthAdjust="spacingAndGlyphs">X</text><text x="892" y="516" font-family="Liberation Serif" font-style="italic" font-size="22" fill="#e8a050" textLength="14" lengthAdjust="spacingAndGlyphs">S</text>
 <text x="920" y="511.5" font-family="Liberation Sans" font-weight="bold" font-size="22" fill="#666c8c" stroke="#666c8c" stroke-width="0.9" textLength="69" lengthAdjust="spacingAndGlyphs">资料网</text>
 <text x="920" y="521" font-family="Liberation Mono" font-size="8" font-weight="bold" fill="#5a6080" textLength="69" lengthAdjust="spacingAndGlyphs">ZL.XS1616.COM</text>
</svg>
<!-- dialog -->
<div class="a" style="left:89px;top:112px;width:240px;height:297px;background:#e7e8e8;border:1px solid #c4c8c8;border-top:none"></div>
<div class="a" style="left:89px;top:112px;width:240px;height:18px;background:#5b8a82"></div>
<svg class="a" style="left:94px;top:115px" width="13" height="13" viewBox="0 0 13 13"><g fill="#fff"><circle cx="6.5" cy="6.5" r="4.3"/><rect x="5.5" y="1" width="2" height="11" /><rect x="1" y="5.5" width="11" height="2"/><rect x="5.5" y="1" width="2" height="11" transform="rotate(45 6.5 6.5)"/><rect x="5.5" y="1" width="2" height="11" transform="rotate(-45 6.5 6.5)"/></g><circle cx="6.5" cy="6.5" r="2.3" fill="#5b8a82"/></svg>
<div class="t" style="left:113px;top:116px;font-size:11px;color:#fff">工件</div>
<svg class="a" style="left:313px;top:117px" width="10" height="10"><path d="M1,1 L9,9 M9,1 L1,9" stroke="#fff" stroke-width="1.6"/></svg>
<div class="a" style="left:90px;top:130px;width:238px;height:3px;background:#dfe6e6"></div>
<!-- section boxes -->
<div class="a" style="left:91px;top:132px;width:236px;height:102px;background:#fff;border-bottom:2px solid #d9dbdb"></div>
<div class="a" style="left:91px;top:236px;width:236px;height:47px;background:#fff;border-bottom:2px solid #d9dbdb"></div>
<div class="a" style="left:91px;top:285px;width:236px;height:71px;background:#fff;border-bottom:2px solid #d9dbdb"></div>
<div class="a" style="left:91px;top:358px;width:236px;height:17px;background:#fff;border-bottom:1px solid #d9dbdb"></div>
<div class="t" style="left:99.5px;top:137.5px;font-size:10px;color:#3d8bbd;--fw:29px;transform:scaleX(0.967);transform-origin:0 0">几何体</div>
<div class="t" style="left:100px;top:241.5px;font-size:10px;color:#3d8bbd;--fw:19px;transform:scaleX(0.950);transform-origin:0 0">偏置</div>
<div class="t" style="left:100px;top:290.5px;font-size:10px;color:#3d8bbd;--fw:19px;transform:scaleX(0.950);transform-origin:0 0">描述</div>
<div class="t" style="left:99.5px;top:362px;font-size:10px;color:#3d8bbd;--fw:51px;transform:scaleX(1.020);transform-origin:0 0">布局和图层</div>
<svg class="a" style="left:312px;top:137px" width="10" height="235"><path d="M1.5,7 L5,3 L8.5,7 M1.5,111 L5,107 L8.5,111 M1.5,160 L5,156 L8.5,160 M1.5,227 L5,231 L8.5,227" stroke="#4a88b0" stroke-width="1.2" fill="none"/></svg>
<div class="t" style="left:100.5px;top:164px;font-size:9px;color:#333;--fw:35px;transform:scaleX(0.972);transform-origin:0 0">指定部件</div>
<div class="t" style="left:100.5px;top:189px;font-size:9px;color:#333;--fw:35px;transform:scaleX(0.972);transform-origin:0 0">指定毛坯</div>
<div class="t" style="left:100.5px;top:213.5px;font-size:9px;color:#333;--fw:35px;transform:scaleX(0.972);transform-origin:0 0">指定检查</div>
<!-- geometry buttons -->
<svg class="a" style="left:270px;top:155px" width="50" height="74" viewBox="270 155 50 74">
 <g fill="#fdfdfd" stroke="#d6d6d6" stroke-width="1"><rect x="270.5" y="155.5" width="23" height="23"/><rect x="295.5" y="155.5" width="23" height="23"/><rect x="270.5" y="180.5" width="23" height="22"/><rect x="295.5" y="180.5" width="23" height="22"/><rect x="270.5" y="205.5" width="23" height="22"/><rect x="295.5" y="205.5" width="23" height="22"/></g>
 <rect x="296.5" y="181.5" width="21" height="20" fill="none" stroke="#888" stroke-width="0.6" stroke-dasharray="1,1"/>
 <!-- part icon -->
 <path d="M274,164 L283,160 L291,164 V172 L283,176 L274,172 Z" fill="#7e9ce4" stroke="#4a64b4" stroke-width="0.7"/>
 <path d="M274,164 L283,168 L291,164 L283,160 Z" fill="#c0d2f6" stroke="#4a64b4" stroke-width="0.6"/>
 <path d="M278.5,162 L283.5,164.3 V169.5 L278.5,167.2 Z" fill="#5a76c4"/>
 <path d="M283,168 V176" stroke="#4a64b4" stroke-width="0.6"/>
 <!-- flashlight icons -->
 <g id="fl"><path d="M298,161 L301,158 L315,169 L310,174.5 Z" fill="#3560c0" stroke="#1e3a80" stroke-width="0.7"/><path d="M300,159.5 L312,169" stroke="#8fb0f0" stroke-width="1"/><ellipse cx="312.5" cy="171.8" rx="4.3" ry="2.3" transform="rotate(-45 312.5 171.8)" fill="#e4eefc" stroke="#1e3a80" stroke-width="1"/></g>
 <use href="#fl" y="25"/>
 <g opacity="0.5"><path d="M298,211 L301,208 L315,219 L310,224.5 Z" fill="#a8bcd4"/><ellipse cx="312.5" cy="221.8" rx="4.3" ry="2.3" transform="rotate(-45 312.5 221.8)" fill="#e8f0f8" stroke="#98a8c0" stroke-width="1"/></g>
 <!-- blank wire cube -->
 <path d="M276,186.5 L283,183.5 L290,186.5 V195.5 L283,198.5 L276,195.5 Z M276,186.5 L283,189.5 L290,186.5 M283,189.5 V198.5 M276,195.5 L283,192 L290,195.5" stroke="#3a3a3a" stroke-width="0.8" fill="none"/>
 <!-- red check block -->
 <path d="M274,215 L283,211 L292,215 V220 L284,224 L274,220 Z" fill="#b81010"/><path d="M274,215 L283,219 L292,215 L283,211 Z" fill="#e03434"/><path d="M283,219 V224" stroke="#901010" stroke-width="0.6"/>
</svg>
<!-- offset -->
<div class="t" style="left:100.5px;top:263px;font-size:9px;color:#333;--fw:35px;transform:scaleX(0.972);transform-origin:0 0">部件偏置</div>
<div class="a" style="left:239px;top:259px;width:61px;height:17px;background:#fff;border:1px solid #c8c8c8"></div>
<div class="a" style="left:240px;top:260px;width:58px;height:15px;overflow:hidden"><div class="t" style="left:15.5px;top:2px;font-size:11.5px;color:#555;letter-spacing:0.4px">0. 00000</div></div>
<div class="a" style="left:301px;top:259px;width:18px;height:17px;background:#fbfbfb;border:1px solid #c8c8c8"></div>
<svg class="a" style="left:304px;top:261px" width="12" height="13"><path d="M3.5,6 V4 A2.5,2.5 0 0 1 8.5,4 V6" stroke="#a88a20" stroke-width="1.2" fill="none"/><rect x="2" y="6" width="8" height="6" rx="1" fill="#e8c840" stroke="#b09020" stroke-width="0.6"/></svg>
<!-- description -->
<div class="a" style="left:100px;top:308px;width:219px;height:16px;background:#fff;border:1px solid #c6c6c6"></div>
<div class="t" style="left:100px;top:332.5px;font-size:9.5px;color:#333;--fw:89px;transform:scaleX(0.902);transform-origin:0 0">材料: CARBON STEEL</div>
<div class="a" style="left:295px;top:325px;width:24px;height:24px;background:#fbfbfb;border:1px solid #cfcfcf"></div>
<svg class="a" style="left:297px;top:327px" width="20" height="20" viewBox="0 0 20 20"><path d="M2.5,15.5 L10,8 C9,5 10.5,2 14,1.5 L12,4.5 L13,7 L15.5,8 L18.5,6 C18.5,9.5 15.5,11.5 12,11 L4.5,18.5 C3.5,19.5 1.5,17.5 2.5,15.5 Z" fill="#ecc63a" stroke="#9a7a18" stroke-width="0.9" stroke-linejoin="round"/><circle cx="4" cy="17" r="1" fill="#fff2b0"/></svg>
<!-- buttons -->
<div class="a" style="left:235px;top:383px;width:40px;height:19px;background:#9fcdea;border:1px solid #72aed8"></div>
<div class="t" style="left:245.7px;top:388.5px;font-size:9px;color:#1e2a30;--fw:17.6px;transform:scaleX(0.978);transform-origin:0 0">确定</div>
<div class="a" style="left:278px;top:383px;width:41px;height:19px;background:#d3d3d3;border:1px solid #c0c0c0"></div>
<div class="t" style="left:289px;top:388.5px;font-size:9px;color:#222;--fw:17.6px;transform:scaleX(0.978);transform-origin:0 0">取消</div>
<svg class="a" style="left:310px;top:180px;z-index:5" width="100" height="55" viewBox="310 180 100 55">
 <path d="M316.5,185.5 L392,216 L388,223.5 L316,187.5 Z" fill="#e03e30"/>
 <polygon points="403.5,227.5 382.5,226 396,215" fill="#ee3a2c"/>
</svg>
</body></html>
